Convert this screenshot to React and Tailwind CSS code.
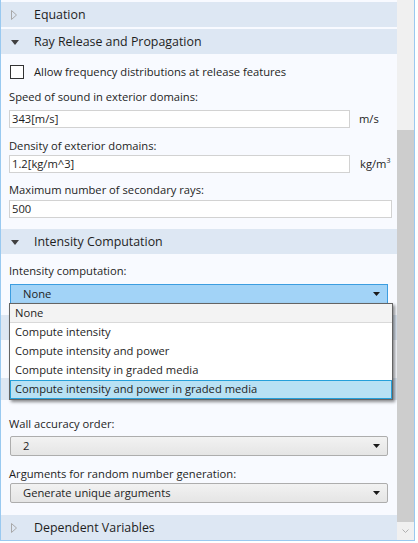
import React from 'react';

const font = { fontFamily: '"Segoe UI", "Open Sans", "Noto Sans", sans-serif' };

function Caret() {
  return (
    <svg width="7" height="4" viewBox="0 0 7 4" className="shrink-0">
      <path d="M0 0h7L3.5 4z" fill="#1a1a1a" />
    </svg>
  );
}

function SectionHeader({ title, open, className = '' }) {
  return (
    <div className={`flex items-center h-[25px] pt-[1px] bg-[#dde7f3] text-[12.4px] text-[#1e1e1e] ${className}`}>
      <div className="w-[33px] pl-[10px] flex items-center">
        {open ? (
          <svg width="8" height="5" viewBox="0 0 8 5">
            <path d="M0 0h8L4 5z" fill="#404040" />
          </svg>
        ) : (
          <svg width="6" height="10" viewBox="0 0 6 10">
            <path d="M0.5 0.5v9l5-4.5z" fill="none" stroke="#a8a8a8" />
          </svg>
        )}
      </div>
      <span>{title}</span>
    </div>
  );
}

function Label({ children, className = '' }) {
  return <div className={`pl-[8px] h-[16px] leading-[16px] whitespace-nowrap ${className}`}>{children}</div>;
}

function Field({ value, className = '' }) {
  return (
    <div className={`h-[18px] border border-[#d2d2d2] bg-white px-[2px] flex items-center ${className}`}>
      {value}
    </div>
  );
}

function GraySelect({ value, className = '' }) {
  return (
    <div className={`h-[20px] mx-[9px] rounded-[2px] border border-[#adadad] bg-gradient-to-b from-[#f2f2f2] to-[#e5e5e5] flex items-center pl-[12px] pr-[7px] ${className}`}>
      <span className="flex-1">{value}</span>
      <Caret />
    </div>
  );
}

const options = [
  'Compute intensity',
  'Compute intensity and power',
  'Compute intensity in graded media',
];

export default function App() {
  return (
    <div style={font} className="w-[418px] h-[543px] bg-white text-[#1e1e1e] text-[11.2px]">
      <div className="w-[415px] h-[541px] border-l border-r border-b border-[#99c9f0] flex overflow-hidden">
        {/* panel body */}
        <div className="flex-1 bg-[#f8faff] pt-[2px] relative overflow-hidden">
          <SectionHeader title="Equation" />
          <SectionHeader title="Ray Release and Propagation" open className="mt-[2px]" />

          <div className="flex items-center gap-[10px] pl-[9px] mt-[10px] h-[16px]">
            <div className="w-[14px] h-[14px] border border-[#333] bg-white" />
            <span>Allow frequency distributions at release features</span>
          </div>

          <Label className="mt-[9px]">Speed of sound in exterior domains:</Label>
          <div className="flex items-center mt-[5px] pl-[8px]">
            <Field value="343[m/s]" className="w-[341px]" />
            <span className="ml-[9px]">m/s</span>
          </div>

          <Label className="mt-[10px]">Density of exterior domains:</Label>
          <div className="flex items-center mt-[1px] pl-[8px]">
            <Field value="1.2[kg/m^3]" className="w-[341px]" />
            <span className="ml-[10px] whitespace-nowrap flex items-start">
              <span>kg/m</span>
              <span className="text-[7px] leading-[7px] mt-[1px]">3</span>
            </span>
          </div>

          <Label className="mt-[9px]">Maximum number of secondary rays:</Label>
          <div className="mt-[2px] pl-[8px] pr-[5px]">
            <Field value="500" />
          </div>

          <SectionHeader title="Intensity Computation" open className="mt-[11px]" />

          <Label className="mt-[9px]">Intensity computation:</Label>
          <div className="mt-[5px] mx-[9px] h-[20px] border border-[#3c9de0] bg-[#a2d3f7] flex items-center pl-[12px] pr-[7px]">
            <span className="flex-1">None</span>
            <Caret />
          </div>

          {/* content hidden behind the open list */}
          <div className="h-[112px] flex flex-col">
            <div className="h-[11px]" />
            <div className="h-[25px] bg-[#dde7f3]" />
            <div className="h-[38px]" />
            <div className="h-[22px] bg-[#dde7f3]" />
          </div>

          <Label>Wall accuracy order:</Label>
          <GraySelect value="2" className="mt-[4px]" />
          <Label className="mt-[10px]">Arguments for random number generation:</Label>
          <GraySelect value="Generate unique arguments" className="mt-[1px]" />

          <SectionHeader title="Dependent Variables" className="mt-[12px]" />

          {/* open dropdown list */}
          <div className="absolute left-[8px] top-[303px] w-[384px] bg-white border border-[#646464] shadow-[2px_2px_3px_rgba(0,0,0,0.45)]">
            <div className="h-[19px] flex items-center pl-[5px] bg-[#f3f3f3] border-b border-[#d9d9d9]">None</div>
            {options.map((o) => (
              <div key={o} className="h-[19px] flex items-center pl-[5px]">{o}</div>
            ))}
            <div className="h-[19px] flex items-center pl-[4px] bg-[#b8e1f4] border border-[#26a0da]">
              Compute intensity and power in graded media
            </div>
          </div>
        </div>

        {/* scrollbar */}
        <div className="w-[17px] bg-[#f0f0f0] flex flex-col">
          <div className="h-[130px]" />
          <div className="flex-1 bg-[#cdcdcd]" />
          <div className="h-[18px] flex items-center justify-center">
            <svg width="7" height="4" viewBox="0 0 7 4">
              <path d="M0.5 0.5l3 3 3-3" fill="none" stroke="#b0b0b0" />
            </svg>
          </div>
        </div>
      </div>
    </div>
  );
}
